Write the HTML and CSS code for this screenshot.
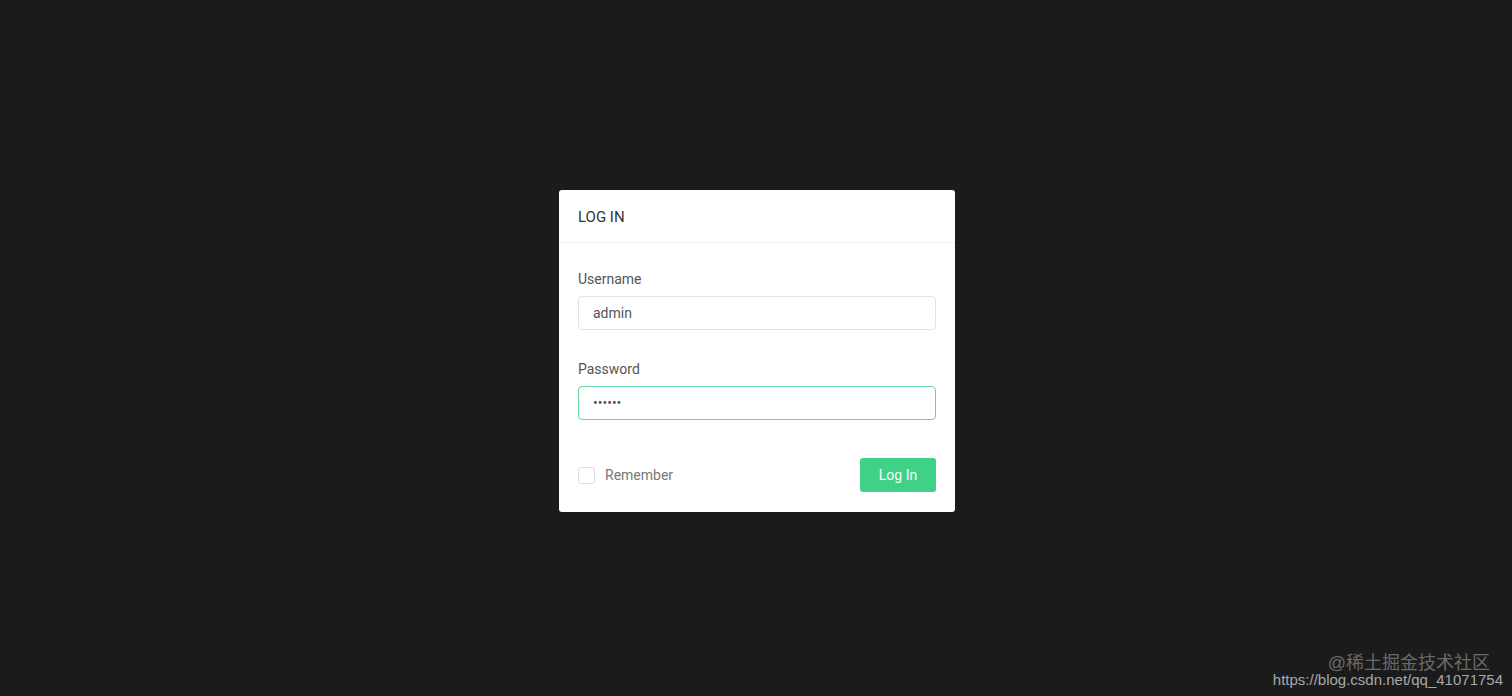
FILE: index.html
```html
<!DOCTYPE html>
<html lang="en">
<head>
    <meta charset="UTF-8">
    <meta name="viewport" content="width=device-width, initial-scale=1.0">
    <title>Log In</title>
    <link rel="stylesheet" href="styles.css">
</head>
<body>
    <div class="page">
        <div class="login-card">
            <div class="card-header">LOG IN</div>
            <form class="card-body" onsubmit="return false">
                <label class="field-label" for="username">Username</label>
                <input class="field-input" type="text" id="username" value="admin">

                <label class="field-label" for="password">Password</label>
                <input class="field-input active" type="password" id="password" value="123456">

                <div class="card-footer">
                    <label class="remember">
                        <span class="check-box"></span>
                        Remember
                    </label>
                    <button type="submit" class="login-btn">Log In</button>
                </div>
            </form>
        </div>
    </div>

    <!-- Watermark -->
    <div class="watermark">
        <div class="wm-top">@稀土掘金技术社区</div>
        <div class="wm-bottom">https://blog.csdn.net/qq_41071754</div>
    </div>
</body>
</html>
```
FILE: styles.css
```css
html, body {
    margin: 0;
    padding: 0;
    height: 100%;
}
body {
    font-family: Roboto, "Noto Sans", Arial, sans-serif;
    background-color: #1b1b1b;
    overflow: hidden;
    position: relative;
}
.page {
    display: flex;
    justify-content: center;
    padding-top: 190px;
    padding-left: 2px;
}
.login-card {
    width: 396px;
    background: white;
    border-radius: 3px;
}
.card-header {
    padding: 18px 19px 16px;
    font-size: 15px;
    color: #333;
    border-bottom: 1px solid #f0f0f0;
}
.card-body {
    padding: 28px 19px 20px;
    display: flex;
    flex-direction: column;
}
.field-label {
    font-size: 14px;
    color: #555;
    margin-bottom: 9px;
}
.field-input {
    box-sizing: border-box;
    height: 34px;
    padding: 0 14px;
    font-family: inherit;
    font-size: 14px;
    color: #555;
    border: 1px solid #e3e3e3;
    border-radius: 4px;
    margin: 0 0 31px;
    outline: none;
}
.field-input.active {
    border-color: #5fd9a0;
}
.card-footer {
    display: flex;
    justify-content: space-between;
    align-items: center;
    margin-top: 7px;
}
.remember {
    display: flex;
    align-items: center;
    gap: 10px;
    font-size: 14px;
    color: #777;
}
.check-box {
    width: 15px;
    height: 15px;
    border: 1px solid #e0e0e0;
    border-radius: 3px;
}
.login-btn {
    width: 76px;
    height: 34px;
    background-color: #3fd185;
    color: white;
    font-family: inherit;
    font-size: 14px;
    border: none;
    border-radius: 3px;
    cursor: pointer;
}
.login-btn:hover {
    background-color: #34c078;
}
.watermark {
    position: absolute;
    right: 9px;
    bottom: 8px;
    text-align: right;
    color: #a8a8a8;
    font-family: "Liberation Sans", "Noto Sans CJK SC", sans-serif;
    font-size: 15px;
    line-height: 16px;
}
.wm-top {
    color: #6a6a6a;
    margin-right: 13px;
    font-size: 18px;
    line-height: 17px;
}
```
